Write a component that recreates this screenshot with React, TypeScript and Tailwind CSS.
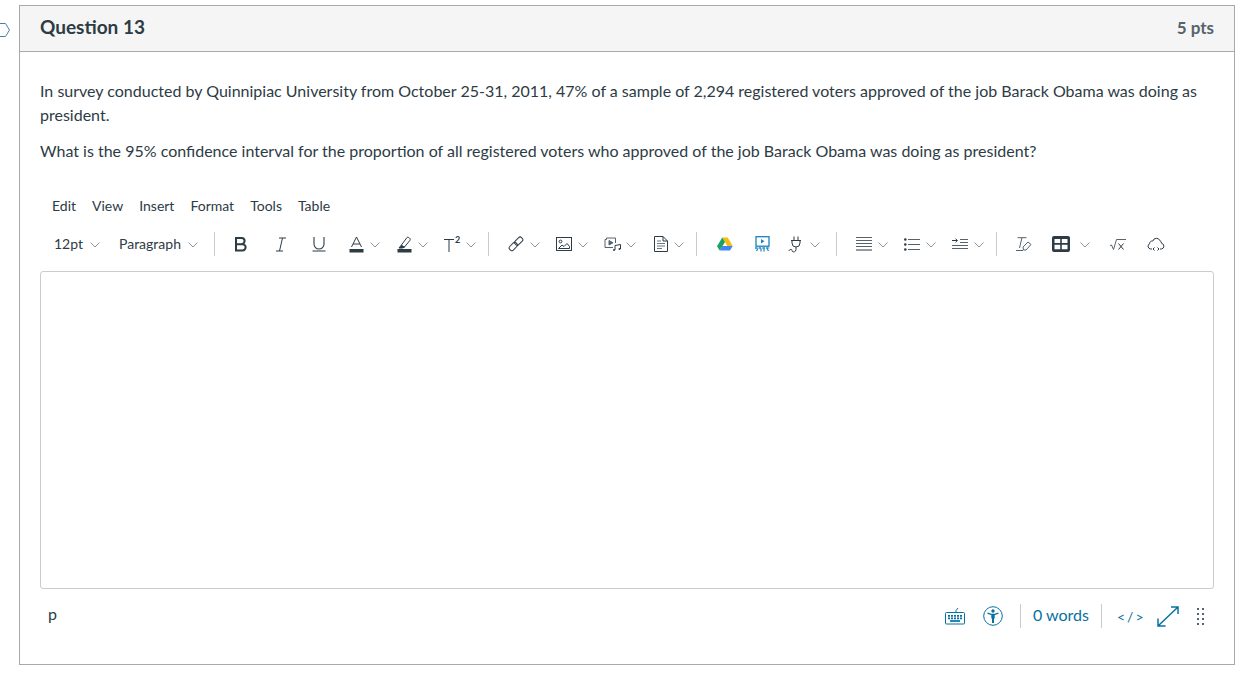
import type { ReactNode } from 'react'

const ink = '#2d3b45'
const blue = '#0770a3'

const Chevron = () => (
  <svg width="10" height="6" viewBox="0 0 10 6" fill="none" stroke="#8b969e" strokeWidth="1" className="mt-[2px]">
    <path d="M0.5 0.5 L5 5 L9.5 0.5" />
  </svg>
)

const Sep = () => <div className="w-px h-6 bg-[#c7cdd1]" />

// one toolbar cell: fixed width so that the icons land where the reference has them
const Cell = ({ w, children }: { w: string; children: ReactNode }) => (
  <div className={`${w} h-6 flex items-center shrink-0`}>{children}</div>
)

const Bold = () => (
  <svg width="14" height="15" viewBox="0 0 14 15" fill="none" stroke={ink} strokeWidth="2">
    <path d="M2 1h5.500a3 3 0 0 1 0 6.200H2zM2 7.200h6.500a3.100 3.100 0 0 1 0 6.300H2z" />
  </svg>
)
const Italic = () => (
  <svg width="12" height="15" viewBox="0 0 12 15" fill="none" stroke={ink} strokeWidth="1">
    <path d="M4 1h7M1 14h7M7.500 1 4.500 14" />
  </svg>
)
const Underline = () => (
  <svg width="14" height="16" viewBox="0 0 14 16" fill="none" stroke={ink} strokeWidth="1.100">
    <path d="M2 1v7a5 5 0 0 0 10 0V1M0.500 15h13" />
  </svg>
)
const TextColor = () => (
  <svg width="15" height="17" viewBox="0 0 15 17" fill="none" stroke={ink} strokeWidth="1">
    <path d="M2.500 11 7.500 1l5 10M4 8h7" />
    <rect x="0.500" y="13" width="14" height="3.500" fill={ink} stroke="none" />
  </svg>
)
const Highlight = () => (
  <svg width="15" height="17" viewBox="0 0 15 17" fill="none" stroke={ink} strokeWidth="1">
    <path d="M4 9.500 10 1.500c1-1 4 1 3 2.800L7.500 11z" />
    <path d="M4 9.500 2 12h3.500l2-1z" fill={ink} />
    <rect x="0.500" y="13" width="14" height="3.500" fill={ink} stroke="none" />
  </svg>
)
const Superscript = () => (
  <span className="flex items-start text-[#2d3b45] leading-none font-light">
    <svg width="10" height="13" viewBox="0 0 10 13" fill="none" stroke={ink} strokeWidth="1" className="mt-[3px]">
      <path d="M0 .5h10M5 .5V13" />
    </svg>
    <span className="text-[9px] font-bold ml-[1px] -mt-[1px]">2</span>
  </span>
)
const LinkIcon = () => (
  <svg width="16" height="16" viewBox="0 0 16 16" fill="none" stroke={ink} strokeWidth="1">
    <rect x="8.200" y="0.600" width="5" height="9" rx="2" transform="rotate(45 10.700 5.100)" />
    <rect x="2.800" y="6" width="5" height="9" rx="2" transform="rotate(45 5.300 10.500)" />
  </svg>
)
const ImageIcon = () => (
  <svg width="16" height="14" viewBox="0 0 16 14" fill="none" stroke={ink} strokeWidth="1">
    <rect x="0.500" y="0.500" width="15" height="13" />
    <circle cx="4.500" cy="4.500" r="1.400" />
    <path d="M2.500 11.500 6 8l2 1.500 3-3 2.500 3v2z" />
  </svg>
)
const MediaIcon = () => (
  <svg width="18" height="15" viewBox="0 0 18 15" fill="none" stroke="#56636c" strokeWidth="1">
    <path d="M9 10.500H1V2.500h1.500V1h9v5" />
    <path d="M5 3.500v4.500l4-2.200z" fill="#56636c" />
    <path d="M11 13V8.500l5.500-1V12" stroke={ink} />
    <circle cx="10" cy="13" r="1" fill={ink} stroke="none" />
    <circle cx="15.500" cy="12" r="1" fill={ink} stroke="none" />
  </svg>
)
const DocIcon = () => (
  <svg width="14" height="16" viewBox="0 0 14 16" fill="none" stroke={ink} strokeWidth="1">
    <path d="M.5.5h8.500l4.500 4.500v10.500H.5z" />
    <path d="M9 .5V5h4.500" />
    <path d="M3 5h4M3 7.500h8M3 10h8M3 12.500h5" stroke="#6b7780" strokeWidth="1.200" />
  </svg>
)
const DriveIcon = () => (
  <svg width="16" height="14" viewBox="0 0 16 14">
    <path d="M5.300.5h5.400l5 8.500h-5.400z" fill="#f7bb14" />
    <path d="M5.300.5 0 9.200l2.700 4.300L8 4.900z" fill="#1ba261" />
    <path d="M5.300 9h10.400l-2.700 4.500H2.700z" fill="#4285f4" />
  </svg>
)
const PresentIcon = () => (
  <svg width="15" height="16" viewBox="0 0 15 16" fill="none" stroke="#1a82c0">
    <rect x="1" y="0.700" width="13" height="9.500" strokeWidth="1.300" />
    <path d="M6 3v4.500l3.500-2.200z" fill="#1a82c0" stroke="none" />
    <path d="M0 12h15" strokeWidth="1.500" strokeDasharray="2.500 1.200" />
    <path d="M3 12.500 1.500 15M6 12.500V15.500M9 12.500V15.500M12 12.500l1.500 2.500" strokeWidth="1.200" />
  </svg>
)
const PlugIcon = () => (
  <svg width="16" height="17" viewBox="0 0 16 17" fill="none" stroke={ink} strokeWidth="1">
    <path d="M6 .5v4M10 .5v4M3 4.500h10M4 4.500v2.500a4 4 0 0 0 8 0V4.500M8 11v2.500c0 3-4 3-4 1s-3-1-3 .5" />
  </svg>
)
const AlignIcon = () => (
  <svg width="16" height="14" viewBox="0 0 16 14" strokeWidth="1">
    <path d="M0 .5h16M0 3.500h16M0 6.500h16M0 9.500h16" stroke="#56636c" />
    <path d="M0 13h16" stroke={ink} />
  </svg>
)
const ListIcon = () => (
  <svg width="16" height="13" viewBox="0 0 16 13" stroke="#56636c" strokeWidth="1">
    <path d="M4 1.500h12M4 6.500h12M4 11.500h12" />
    <circle cx="1.300" cy="1.500" r="1.300" fill={ink} stroke="none" />
    <circle cx="1.300" cy="6.500" r="1.300" fill={ink} stroke="none" />
    <circle cx="1.300" cy="11.500" r="1.300" fill={ink} stroke="none" />
  </svg>
)
const IndentIcon = () => (
  <svg width="16" height="12" viewBox="0 0 16 12" fill="none" stroke="#56636c" strokeWidth="1">
    <path d="M8 1.500h8M8 4.500h8M0 7.500h16M0 10.500h16" />
    <path d="M0 2.500h5M3.500 .8 5.500 2.500 3.500 4.200" stroke={ink} />
  </svg>
)
const ClearIcon = () => (
  <svg width="16" height="15" viewBox="0 0 16 15" fill="none" stroke="#56636c" strokeWidth="1">
    <path d="M1.500.7h9M6 .7 3.500 11M0 13.500h7" />
    <path d="M7 10 12 5l3 2.500-5 5.500H7.500z" />
  </svg>
)
const TableIcon = () => (
  <svg width="18" height="16" viewBox="0 0 18 16">
    <rect width="18" height="16" rx="2" fill={ink} />
    <path d="M2.500 3h5.700v4H2.500zM9.800 3h5.700v4H9.800zM2.500 8.700h5.700v4.500H2.500zM9.800 8.700h5.700v4.500H9.800z" fill="#fff" />
  </svg>
)
const SqrtIcon = () => (
  <svg width="16" height="11" viewBox="0 0 16 11" fill="none" stroke="#56636c" strokeWidth="1">
    <path d="M0 6.500 1.500 6l2 4.500L6.500.5H16" />
    <path d="M8.500 4.500l5 6M13.500 4.500l-5 6" stroke={ink} />
  </svg>
)
const CloudIcon = () => (
  <svg width="18" height="15" viewBox="0 0 18 15" fill="none" stroke={ink} strokeWidth="1">
    <path d="M5 12H3.500A2.800 2.800 0 0 1 2.500 6.800 2.800 2.800 0 0 1 5.800 4 3.800 3.800 0 0 1 13 3.800a2.500 2.500 0 0 1 1.500 2.500A2.900 2.900 0 0 1 14.500 12H13" />
    <path d="M7.500 10.500 6 12l1.500 1.500M10.500 10.500 12 12l-1.500 1.500" />
  </svg>
)
const KeyboardIcon = () => (
  <svg width="20" height="18" viewBox="0 0 20 18" fill="none" stroke={blue} strokeWidth="1">
    <rect x="0.500" y="5.500" width="19" height="11.500" rx="1" />
    <path d="M11 5.500V3.500L13 1" />
    <path d="M3 8.800h14M3 11.300h14" strokeWidth="1.700" strokeDasharray="2 1" />
    <path d="M5 14h10" strokeWidth="1.700" />
  </svg>
)
const A11yIcon = () => (
  <svg width="20" height="20" viewBox="0 0 20 20" fill="none" stroke={blue}>
    <circle cx="10" cy="10" r="9.300" strokeWidth="1" />
    <circle cx="10" cy="5" r="1.700" fill={blue} stroke="none" />
    <path d="M4.500 7.200 8 8.300h4l3.500-1.100" strokeWidth="1.300" />
    <path d="M8.300 8h3.400v4.500h-.7V17H9v-4.500h-.7z" fill={blue} stroke="none" />
  </svg>
)
const ExpandIcon = () => (
  <svg width="22" height="21" viewBox="0 0 22 21" fill="none" stroke={blue} strokeWidth="1.500">
    <path d="M14 1h7v7M21 1 1 20M1 12.500V20h7.500" />
  </svg>
)
const Grip = () => (
  <div className="grid grid-cols-2 gap-x-[3px] gap-y-[3px]">
    {[0, 1, 2, 3, 4, 5, 6, 7].map((i) => (
      <span key={i} className="w-[2px] h-[2px] bg-[#56636c]" />
    ))}
  </div>
)

export default function App() {
  return (
    <div
      className="w-[1255px] h-[678px] bg-white relative overflow-hidden pt-[5px] pl-[19px] text-[#2d3b45]"
      style={{ fontFamily: 'Lato, "Liberation Sans", sans-serif' }}
    >
      {/* bookmark marker cut off by the window edge */}
      <svg className="absolute left-0 top-[23px]" width="10" height="14" viewBox="0 0 10 14" fill="none" stroke="#4a7fa5" strokeWidth="1">
        <path d="M-2 .5h7.500L9.500 7l-4 6.500H-2" />
      </svg>

      <div className="w-[1216px] h-[660px] border border-[#a9a9a9]">
        <div className="h-[46px] bg-[#f5f5f5] border-b border-[#a9a9a9] flex items-center justify-between px-5">
          <h2 className="text-[19px] font-bold leading-none mb-[4px]">Question 13</h2>
          <span className="text-[17px] font-bold text-[#56636c] leading-none mb-[2px]">5 pts</span>
        </div>

        <div className="px-5 pt-[27px]">
          <p className="text-[16px] leading-[24px] mb-[12px]">
            In survey conducted by Quinnipiac University from October 25-31, 2011, 47% of a sample of 2,294 registered voters approved of the job Barack Obama was doing as president.
          </p>
          <p className="text-[16px] leading-[24px]">
            What is the 95% confidence interval for the proportion of all registered voters who approved of the job Barack Obama was doing as president?
          </p>

          <div className="flex gap-[16px] pl-3 pt-[33px] text-[14px] leading-[20px]">
            <span>Edit</span>
            <span>View</span>
            <span>Insert</span>
            <span>Format</span>
            <span>Tools</span>
            <span>Table</span>
          </div>

          <div className="flex items-center h-6 mt-[16px] pl-[14px] text-[14px]">
            <Cell w="w-[36px]"><span className="-mt-[1px]">12pt</span></Cell>
            <Cell w="w-[29px]"><Chevron /></Cell>
            <Cell w="w-[69px]"><span className="-mt-[1px]">Paragraph</span></Cell>
            <Cell w="w-[26px]"><Chevron /></Cell>
            <Cell w="w-[20px]"><Sep /></Cell>
            <Cell w="w-[41px]"><Bold /></Cell>
            <Cell w="w-[37px]"><Italic /></Cell>
            <Cell w="w-[37px]"><Underline /></Cell>
            <Cell w="w-[21px]"><TextColor /></Cell>
            <Cell w="w-[27px]"><Chevron /></Cell>
            <Cell w="w-[21px]"><Highlight /></Cell>
            <Cell w="w-[26px]"><Chevron /></Cell>
            <Cell w="w-[22px]"><Superscript /></Cell>
            <Cell w="w-[22px]"><Chevron /></Cell>
            <Cell w="w-[20px]"><Sep /></Cell>
            <Cell w="w-[22px]"><LinkIcon /></Cell>
            <Cell w="w-[26px]"><Chevron /></Cell>
            <Cell w="w-[22px]"><ImageIcon /></Cell>
            <Cell w="w-[26px]"><Chevron /></Cell>
            <Cell w="w-[22px]"><MediaIcon /></Cell>
            <Cell w="w-[28px]"><Chevron /></Cell>
            <Cell w="w-[20px]"><DocIcon /></Cell>
            <Cell w="w-[22px]"><Chevron /></Cell>
            <Cell w="w-[21px]"><Sep /></Cell>
            <Cell w="w-[38px]"><DriveIcon /></Cell>
            <Cell w="w-[33px]"><PresentIcon /></Cell>
            <Cell w="w-[22px]"><PlugIcon /></Cell>
            <Cell w="w-[26px]"><Chevron /></Cell>
            <Cell w="w-[20px]"><Sep /></Cell>
            <Cell w="w-[22px]"><AlignIcon /></Cell>
            <Cell w="w-[26px]"><Chevron /></Cell>
            <Cell w="w-[22px]"><ListIcon /></Cell>
            <Cell w="w-[26px]"><Chevron /></Cell>
            <Cell w="w-[22px]"><IndentIcon /></Cell>
            <Cell w="w-[22px]"><Chevron /></Cell>
            <Cell w="w-[20px]"><Sep /></Cell>
            <Cell w="w-[36px]"><ClearIcon /></Cell>
            <Cell w="w-[28px]"><TableIcon /></Cell>
            <Cell w="w-[30px]"><Chevron /></Cell>
            <Cell w="w-[37px]"><SqrtIcon /></Cell>
            <Cell w="w-[20px]"><CloudIcon /></Cell>
          </div>

          <div className="h-[318px] mt-[15px] border border-[#c7cdd1] rounded-[3px]" />

          <div className="flex items-center justify-between h-[26px] mt-[14px] pl-[8px]">
            <span className="text-[16px] leading-none mb-[4px]">p</span>
            <div className="flex items-center text-[#0770a3] pr-[10px]">
              <KeyboardIcon />
              <div className="w-[18px]" />
              <A11yIcon />
              <div className="w-[17px]" />
              <Sep />
              <span className="text-[16px] pl-3 pr-[12px] leading-none -mt-[2px]">0 words</span>
              <Sep />
              <span className="text-[14px] tracking-[2px] pl-[15px] pr-[13px] w-[55px]">&lt;/&gt;</span>
              <ExpandIcon />
              <div className="w-[18px]" />
              <Grip />
            </div>
          </div>
        </div>
      </div>
    </div>
  )
}
